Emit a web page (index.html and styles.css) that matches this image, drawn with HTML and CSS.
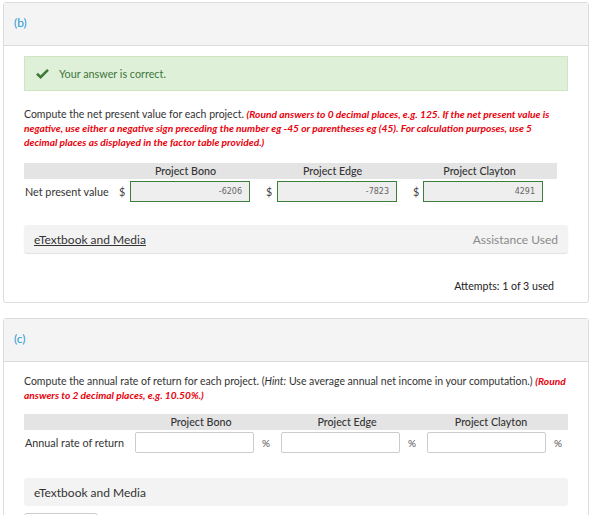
FILE: index.html
```html
<!DOCTYPE html>
<html>
<head>
<meta charset="utf-8">
<link rel="stylesheet" href="styles.css">
</head>
<body>
<div class="page">
  <section class="card">
    <div class="card-head">(b)</div>
    <div class="card-body">
      <div class="alert">
        <svg class="check" width="13" height="11" viewBox="0 0 13 11"><path d="M1 5.8 L4.6 9.2 L12 1.8" fill="none" stroke="#3d7a3a" stroke-width="2.6"/></svg>
        <span>Your answer is correct.</span>
      </div>
      <p class="question q-b">Compute the net present value for each project. <em class="warn">(Round answers to 0 decimal places, e.g. 125. If the net present value is negative, use either a negative sign preceding the number eg -45 or parentheses eg (45). For calculation purposes, use 5 decimal places as displayed in the factor table provided.)</em></p>
      <div class="tbl tbl-npv">
        <div class="th-blank"></div>
        <div class="th">Project Bono</div>
        <div class="th">Project Edge</div>
        <div class="th">Project Clayton</div>
        <div class="row-label">Net present value</div>
        <div class="cell"><span class="unit">$</span><span class="inp done">-6206</span></div>
        <div class="cell"><span class="unit">$</span><span class="inp done">-7823</span></div>
        <div class="cell"><span class="unit">$</span><span class="inp done">4291</span></div>
      </div>
      <div class="media-bar">
        <a class="media-link">eTextbook and Media</a>
        <span class="assist">Assistance Used</span>
      </div>
      <div class="attempts">Attempts: 1 of 3 used</div>
    </div>
  </section>

  <section class="card">
    <div class="card-head">(c)</div>
    <div class="card-body body-c">
      <p class="question">Compute the annual rate of return for each project. (<em>Hint:</em> Use average annual net income in your computation.) <em class="warn">(Round answers to 2 decimal places, e.g. 10.50%.)</em></p>
      <div class="tbl tbl-rate">
        <div class="th-blank"></div>
        <div class="th">Project Bono</div>
        <div class="th">Project Edge</div>
        <div class="th">Project Clayton</div>
        <div class="row-label">Annual rate of return</div>
        <div class="cell"><span class="inp empty"></span><span class="pct">%</span></div>
        <div class="cell"><span class="inp empty"></span><span class="pct">%</span></div>
        <div class="cell"><span class="inp empty"></span><span class="pct">%</span></div>
      </div>
      <div class="media-bar media-c">
        <span class="media-plain">eTextbook and Media</span>
      </div>
      <div class="btn-stub"></div>
    </div>
  </section>
</div>
</body>
</html>
```

FILE: styles.css
```css
* { box-sizing: border-box; }
html, body { margin: 0; padding: 0; background: #fff; }
body {
  font-family: Lato, "Open Sans", "Liberation Sans", sans-serif;
  color: #333;
  font-size: 10.8px;
  overflow: hidden;
  height: 515px;
}
.page {
  padding: 2px 10px 0 3px;
  display: flex;
  flex-direction: column;
  gap: 15px;
}
.card {
  border: 1px solid #dcdcdc;
  border-radius: 3px;
  background: #fff;
}
.card-head {
  height: 43px;
  background: #f4f4f4;
  border-bottom: 1px solid #dcdcdc;
  color: #2b9bd8;
  font-size: 12px;
  line-height: 14px;
  padding: 13px 0 0 10px;
}
.card-body {
  padding: 10px 20px 9px 20px;
}
.alert {
  height: 35px;
  background: #dff0d8;
  border: 1px solid #cfe6c2;
  display: flex;
  align-items: center;
  padding-left: 11px;
  gap: 10px;
  color: #3c763d;
  font-size: 10.8px;
}
.check { display: block; }
.question {
  margin: 16px 0 0 0;
  font-size: 10.5px;
  line-height: 14px;
  color: #333;
}
.q-b { padding-right: 4px; }
.warn {
  color: #e8000b;
  font-weight: bold;
  font-style: italic;
  font-size: 10.2px;
}
.tbl {
  display: grid;
  margin-top: 14px;
  row-gap: 2px;
}
.tbl-npv { grid-template-columns: 92px 147px 147px 147px; width: 531px; }
.tbl-rate { grid-template-columns: 110px 146px 146px 142px; width: 544px; }
.th-blank, .th { background: #e4e4e4; height: 16px; }
.th {
  font-size: 10.7px;
  line-height: 16px;
  color: #333;
  font-weight: 500;
}
.tbl-npv .th { text-align: center; padding-right: 8px; }
.tbl-rate .th { text-align: center; padding-right: 12px; }
.row-label {
  font-size: 10.8px;
  display: flex;
  align-items: center;
  padding-left: 1px;
}
.cell { display: flex; align-items: center; }
.unit { width: 14px; padding-left: 3px; font-size: 10.8px; color: #444; }
.inp {
  display: block;
  height: 21px;
  font-family: "DejaVu Sans", sans-serif;
  font-size: 8px;
  line-height: 19px;
  text-align: right;
  color: #666;
}
.inp.done {
  width: 120px;
  background: #eeeeee;
  border: 1px solid #3f7f3c;
  padding-right: 7px;
}
.tbl-npv .cell:last-child .inp { margin-left: -1px; }
.inp.empty {
  width: 119px;
  height: 21px;
  background: #fff;
  border: 1px solid #cccccc;
  border-radius: 2px;
  margin-left: 1px;
}
.pct { padding-left: 8px; font-size: 10px; color: #555; }
.media-bar {
  margin-top: 23px;
  height: 28px;
  background: #f3f3f3;
  border-radius: 3px;
  box-shadow: 0 1px 1px rgba(0,0,0,0.12);
  display: flex;
  align-items: center;
  justify-content: space-between;
  padding: 0 10px;
  font-size: 12px;
}
.media-link { color: #333; text-decoration: underline; }
.assist { color: #8a8a8a; }
.attempts {
  margin-top: 26px;
  text-align: right;
  padding-right: 14px;
  font-size: 10.6px;
  line-height: 14px;
  color: #222;
}
.body-c { padding-top: 12px; }
.body-c .question { margin-top: 0; }
.body-c .tbl { margin-top: 12px; }
.media-c { margin-top: 25px; box-shadow: none; }
.media-plain { color: #333; }
.btn-stub {
  margin-top: 7px;
  width: 74px;
  height: 20px;
  border: 1px solid #cccccc;
  border-radius: 3px;
}
```
